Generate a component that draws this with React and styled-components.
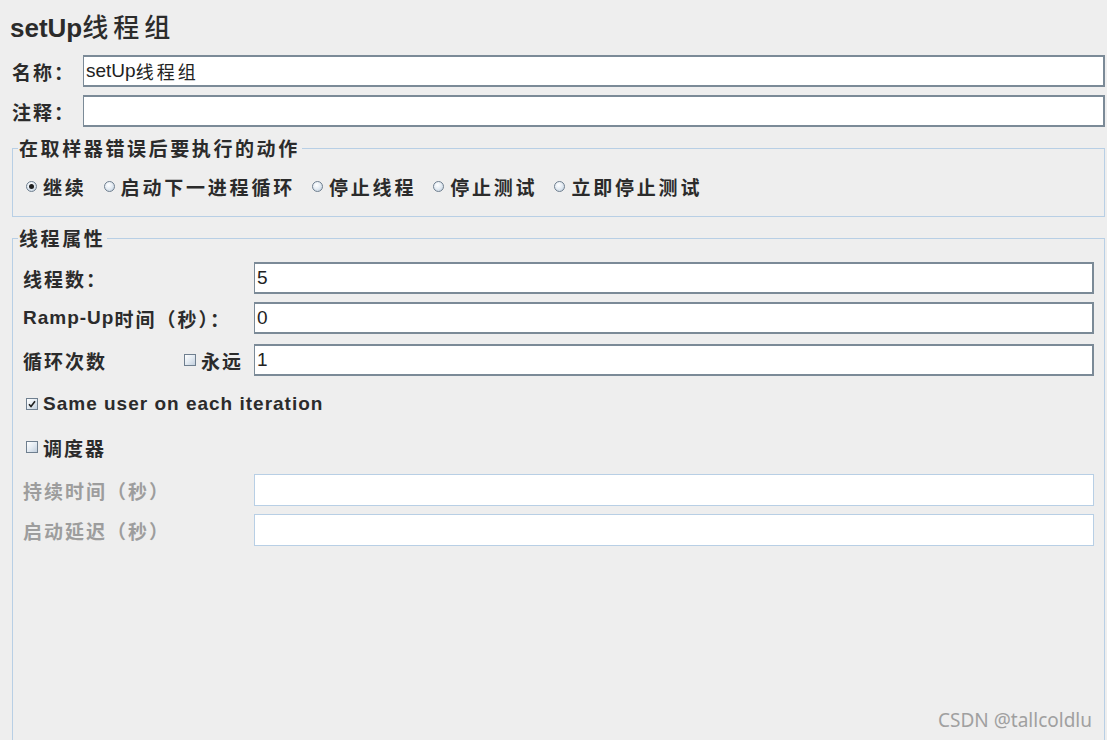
import React from "react";
import styled, { createGlobalStyle } from "styled-components";

const GlobalStyle = createGlobalStyle`
  html, body {
    margin: 0;
    padding: 0;
    overflow: hidden;
    background: #eeeeee;
  }
  body {
    font-family: "Liberation Sans", "Noto Sans CJK SC", sans-serif;
    color: #222;
  }
`;

const CJK = `"Noto Sans CJK SC", "Liberation Sans", sans-serif`;
const LATIN = `"Liberation Sans", "Noto Sans CJK SC", sans-serif`;

const Page = styled.div`
  position: relative;
  width: 1107px;
  height: 740px;
  overflow: hidden;
  padding: 10px 2px 0 10px;
  box-sizing: border-box;
`;

const Title = styled.h1`
  margin: 0;
  font-family: ${LATIN};
  font-size: 26px;
  line-height: 32px;
  font-weight: 700;
  color: #2b2b2b;
  span {
    font-family: ${CJK};
    font-weight: 500;
    letter-spacing: 5px;
  }
`;

const TopRow = styled.div`
  display: flex;
  align-items: center;
  margin-top: ${(p) => p.$top || 8}px;
  padding-left: 2px;
`;

const TopLabel = styled.label`
  width: 71px;
  flex: none;
  font-family: ${CJK};
  font-size: 19px;
  font-weight: 700;
  letter-spacing: 2px;
  color: #2b2b2b;
`;

const TextBox = styled.div`
  flex: 1;
  height: 32px;
  box-sizing: border-box;
  background: #fff;
  border: 1px solid ${(p) => (p.$disabled ? "#b8cfe5" : "#7b8a97")};
  border-width: ${(p) => (p.$disabled ? "1px" : "2px 2px 2px 1px")};
  display: flex;
  align-items: center;
  padding-left: 2px;
  font-family: ${LATIN};
  font-size: 19px;
  color: #222;
  span {
    font-family: ${CJK};
    font-weight: 400;
    letter-spacing: 3px;
    font-size: 18px;
  }
`;

const Group = styled.fieldset`
  margin: ${(p) => p.$top}px 0 0 2px;
  padding: 0 10px 0 10px;
  border: 1px solid #b8cfe5;
  min-height: ${(p) => p.$height}px;
  box-sizing: border-box;
`;

const Legend = styled.legend`
  margin-left: -5px;
  padding: 0 2px 0 1px;
  font-family: ${CJK};
  font-size: 19px;
  line-height: 20px;
  font-weight: 700;
  letter-spacing: 2.6px;
  color: #2b2b2b;
`;

const RadioRow = styled.div`
  display: flex;
  align-items: center;
  gap: 17px;
  height: 56px;
  padding-left: 3px;
  padding-bottom: 2px;
`;

const RadioItem = styled.label`
  display: flex;
  align-items: center;
  gap: 6px;
  font-family: ${CJK};
  font-size: 19px;
  font-weight: 700;
  letter-spacing: 2.8px;
  color: #2b2b2b;
`;

const RadioDot = styled.span`
  width: 11px;
  height: 11px;
  box-sizing: border-box;
  border-radius: 50%;
  border: 1px solid #6f7f8f;
  background: radial-gradient(circle at 40% 35%, #ffffff 0%, #e6edf4 45%, #b9c8d8 100%);
  display: flex;
  align-items: center;
  justify-content: center;
  &::after {
    content: "";
    display: ${(p) => (p.$on ? "block" : "none")};
    width: 5px;
    height: 5px;
    border-radius: 50%;
    background: #1e1e1e;
  }
`;

const Row = styled.div`
  display: flex;
  align-items: center;
  height: 32px;
  margin-top: ${(p) => p.$top}px;
`;

const Label = styled.div`
  width: 231px;
  flex: none;
  display: flex;
  align-items: center;
  font-family: ${CJK};
  font-size: 19px;
  font-weight: 700;
  letter-spacing: 2px;
  color: ${(p) => (p.$muted ? "#9d9d9d" : "#2b2b2b")};
`;

const LatinBold = styled.span`
  font-family: ${LATIN};
  font-size: 19px;
  font-weight: 700;
  letter-spacing: 1px;
`;

const Forever = styled.label`
  margin-left: auto;
  margin-right: 11px;
  display: flex;
  align-items: center;
  gap: 5px;
`;

const Box = styled.span`
  width: 12px;
  height: 12px;
  box-sizing: border-box;
  border: 1px solid #6f7f8f;
  background: linear-gradient(135deg, #ffffff 0%, #e4ebf2 50%, #c2cfdd 100%);
  display: flex;
  align-items: center;
  justify-content: center;
  flex: none;
`;

const CheckRow = styled.label`
  display: flex;
  align-items: center;
  gap: 5px;
  height: 32px;
  margin-top: ${(p) => p.$top}px;
  padding-left: 3px;
  font-family: ${CJK};
  font-size: 19px;
  font-weight: 700;
  letter-spacing: 2px;
  color: #2b2b2b;
`;

const Watermark = styled.div`
  position: absolute;
  right: 15px;
  bottom: 7px;
  font-family: "Noto Sans", "Liberation Sans", sans-serif;
  font-size: 19px;
  color: #a0a0a0;
`;

const Check = () => (
  <svg width="8" height="8" viewBox="0 0 8 8">
    <path d="M1 4.2 L3 6.5 L7 1.2" fill="none" stroke="#1e1e1e" strokeWidth="1.6" />
  </svg>
);

const actions = ["继续", "启动下一进程循环", "停止线程", "停止测试", "立即停止测试"];

export default function App() {
  return (
    <Page>
      <GlobalStyle />
      <Title>
        setUp<span>线程组</span>
      </Title>
      <TopRow $top={11}>
        <TopLabel>名称：</TopLabel>
        <TextBox>
          setUp<span>线程组</span>
        </TextBox>
      </TopRow>
      <TopRow>
        <TopLabel>注释：</TopLabel>
        <TextBox />
      </TopRow>

      <Group $top={11} $height={79}>
        <Legend>在取样器错误后要执行的动作</Legend>
        <RadioRow>
          {actions.map((a, i) => (
            <RadioItem key={a}>
              <RadioDot $on={i === 0} />
              {a}
            </RadioItem>
          ))}
        </RadioRow>
      </Group>

      <Group $top={11} $height={520}>
        <Legend>线程属性</Legend>
        <Row $top={14}>
          <Label>线程数：</Label>
          <TextBox>5</TextBox>
        </Row>
        <Row $top={8}>
          <Label>
            <LatinBold>Ramp-Up</LatinBold>时间（秒）：
          </Label>
          <TextBox>0</TextBox>
        </Row>
        <Row $top={10}>
          <Label>
            循环次数
            <Forever>
              <Box />
              永远
            </Forever>
          </Label>
          <TextBox>1</TextBox>
        </Row>
        <CheckRow $top={12}>
          <Box>
            <Check />
          </Box>
          <LatinBold>Same user on each iteration</LatinBold>
        </CheckRow>
        <CheckRow $top={11}>
          <Box />
          调度器
        </CheckRow>
        <Row $top={11}>
          <Label $muted>持续时间（秒）</Label>
          <TextBox $disabled />
        </Row>
        <Row $top={8}>
          <Label $muted>启动延迟（秒）</Label>
          <TextBox $disabled />
        </Row>
      </Group>
      <Watermark>CSDN @tallcoldlu</Watermark>
    </Page>
  );
}
